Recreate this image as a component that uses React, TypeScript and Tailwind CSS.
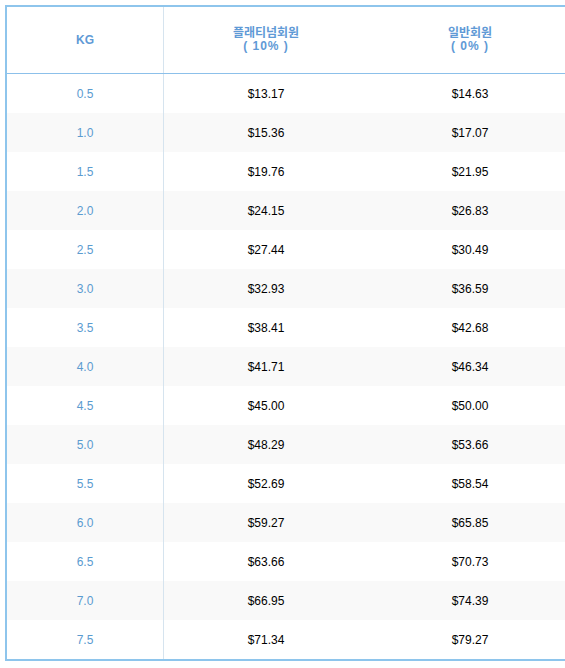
const ROWS: [string, string, string][] = [
  ['0.5', '$13.17', '$14.63'],
  ['1.0', '$15.36', '$17.07'],
  ['1.5', '$19.76', '$21.95'],
  ['2.0', '$24.15', '$26.83'],
  ['2.5', '$27.44', '$30.49'],
  ['3.0', '$32.93', '$36.59'],
  ['3.5', '$38.41', '$42.68'],
  ['4.0', '$41.71', '$46.34'],
  ['4.5', '$45.00', '$50.00'],
  ['5.0', '$48.29', '$53.66'],
  ['5.5', '$52.69', '$58.54'],
  ['6.0', '$59.27', '$65.85'],
  ['6.5', '$63.66', '$70.73'],
  ['7.0', '$66.95', '$74.39'],
  ['7.5', '$71.34', '$79.27'],
]

export default function App() {
  return (
    <div
      className="w-[565px] h-[668px] overflow-hidden bg-white pl-[5px] pt-[5px]"
      style={{ fontFamily: '"Liberation Sans", "Noto Sans CJK KR", sans-serif' }}
    >
      <div className="w-[569px] border-2 border-[#8ec5ec]">
        {/* Header */}
        <div className="grid grid-cols-[156px_205px_204px] h-[67px] border-b border-[#8cc0ea] text-[12px] font-bold text-[#5f9ad6] leading-[13px]">
          <div className="flex items-center justify-center">KG</div>
          <div className="flex flex-col items-center justify-center border-l border-[#d6e4ef]">
            <span>플래티넘회원</span>
            <span className="tracking-[1px]">( 10% )</span>
          </div>
          <div className="flex flex-col items-center justify-center">
            <span>일반회원</span>
            <span className="tracking-[1px]">( 0% )</span>
          </div>
        </div>

        {/* Rows */}
        {ROWS.map(([kg, platinum, normal], i) => (
          <div
            key={kg}
            className={`grid grid-cols-[156px_205px_204px] h-[39px] text-[12px] ${i % 2 === 1 ? 'bg-[#f9f9f9]' : 'bg-white'}`}
          >
            <div className="flex items-center justify-center text-[#5b9bd0]">{kg}</div>
            <div className="flex items-center justify-center border-l border-[#d6e4ef] text-black">{platinum}</div>
            <div className="flex items-center justify-center text-black">{normal}</div>
          </div>
        ))}
      </div>
    </div>
  )
}
